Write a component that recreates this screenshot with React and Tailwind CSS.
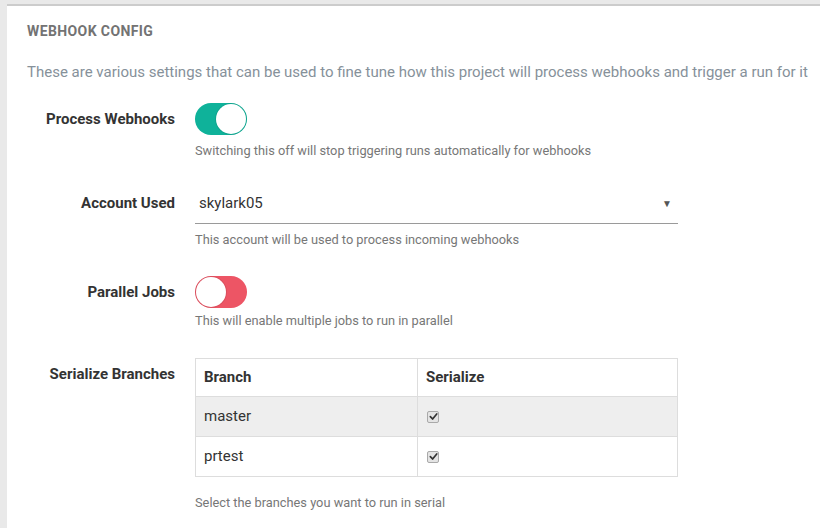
import React from "react";

function Toggle({ on }) {
  return (
    <div
      className={
        "relative w-[52px] h-[32px] rounded-full " +
        (on ? "bg-[#0fb29a]" : "bg-[#ed5565]")
      }
    >
      <div
        className={
          "absolute top-[1px] w-[30px] h-[30px] rounded-full bg-white shadow-[0_0_0_1px_rgba(0,0,0,0.08)] " +
          (on ? "right-[1px]" : "left-[1px]")
        }
      />
    </div>
  );
}

function Check() {
  return (
    <span className="inline-flex items-center justify-center w-[12px] h-[12px] rounded-[2px] border border-[#a9a9a9] bg-[#e4e4e4]">
      <svg width="9" height="9" viewBox="0 0 10 10">
        <path d="M1.5 5.2 L4 7.8 L8.6 2.2" fill="none" stroke="#333" strokeWidth="1.9" strokeLinecap="round" strokeLinejoin="round" />
      </svg>
    </span>
  );
}

function Label({ children, pt }) {
  return (
    <div className={"w-[148px] shrink-0 text-right text-[15px] leading-[20px] font-bold text-[#333] whitespace-nowrap " + pt}>
      {children}
    </div>
  );
}

function Help({ children, mt }) {
  return <div className={"text-[12.8px] leading-[18px] text-[#777] " + mt}>{children}</div>;
}

export default function App() {
  return (
    <div className="h-[528px] overflow-hidden bg-[#e9e9e9] pl-[7px] pt-[4px] font-['Roboto',sans-serif]">
      <div className="bg-white border-t-2 border-[#cccccc] h-[600px] pl-[20px] pt-[17px]">
        <div className="text-[14px] leading-[16px] font-bold text-[#737373] tracking-[0.4px]">WEBHOOK CONFIG</div>
        <div className="mt-[23px] text-[15px] leading-[20px] text-[#86919a] whitespace-nowrap">
          These are various settings that can be used to fine tune how this project will process webhooks and trigger a run for it
        </div>

        <div className="mt-[21px] flex gap-[20px]">
          <Label pt="pt-[6px]">Process Webhooks</Label>
          <div>
            <Toggle on />
            <Help mt="mt-[7px]">Switching this off will stop triggering runs automatically for webhooks</Help>
          </div>
        </div>

        <div className="mt-[23px] flex gap-[20px]">
          <Label pt="pt-[10px]">Account Used</Label>
          <div className="w-[483px]">
            <div className="h-[41px] flex items-center justify-between border-b border-[#9a9a9a] pl-[4px] pr-[6px]">
              <span className="text-[15px] text-[#333]">skylark05</span>
              <span className="text-[10px] text-[#555]">▼</span>
            </div>
            <Help mt="mt-[7px]">This account will be used to process incoming webhooks</Help>
          </div>
        </div>

        <div className="mt-[27px] flex gap-[20px]">
          <Label pt="pt-[6px]">Parallel Jobs</Label>
          <div>
            <Toggle on={false} />
            <Help mt="mt-[4px]">This will enable multiple jobs to run in parallel</Help>
          </div>
        </div>

        <div className="mt-[28px] flex gap-[20px]">
          <Label pt="pt-[6px]">Serialize Branches</Label>
          <div className="w-[483px]">
            <table className="w-full border-collapse border border-[#dddddd] text-[#333]">
              <thead>
                <tr className="h-[38px]">
                  <th className="w-[222px] border border-[#dddddd] text-left px-[8px] text-[15px] font-bold">Branch</th>
                  <th className="border border-[#dddddd] text-left px-[8px] text-[15px] font-bold">Serialize</th>
                </tr>
              </thead>
              <tbody>
                <tr className="h-[40px] bg-[#eeeeee]">
                  <td className="border border-[#dddddd] px-[8px] text-[15px]">master</td>
                  <td className="border border-[#dddddd] px-[9px] align-middle"><div className="flex"><Check /></div></td>
                </tr>
                <tr className="h-[40px]">
                  <td className="border border-[#dddddd] px-[8px] text-[15px]">prtest</td>
                  <td className="border border-[#dddddd] px-[9px] align-middle"><div className="flex"><Check /></div></td>
                </tr>
              </tbody>
            </table>
            <Help mt="mt-[17px]">Select the branches you want to run in serial</Help>
          </div>
        </div>
      </div>
    </div>
  );
}
